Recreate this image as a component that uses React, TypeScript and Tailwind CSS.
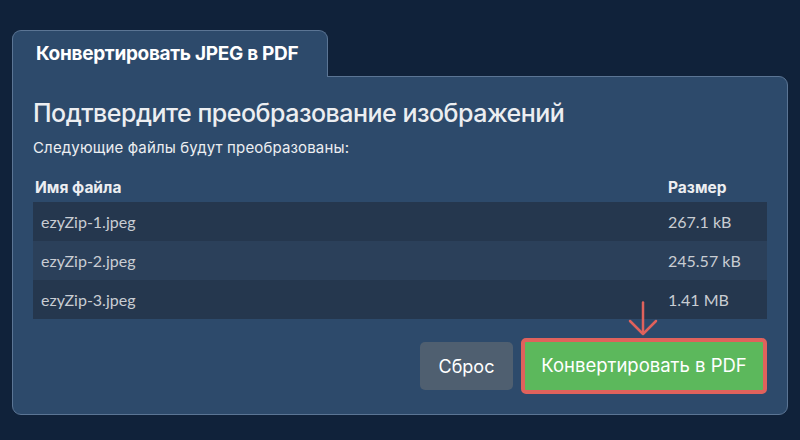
const FILES = [
  { name: 'ezyZip-1.jpeg', size: '267.1 kB' },
  { name: 'ezyZip-2.jpeg', size: '245.57 kB' },
  { name: 'ezyZip-3.jpeg', size: '1.41 MB' },
];

export default function App() {
  return (
    <div className="min-h-screen w-full bg-[#10223a] px-[12px] pt-[30px] font-[Inter,sans-serif]">
      {/* tab */}
      <div className="relative z-10 -mb-px flex h-[47px] w-[316px] items-center rounded-t-[9px] border border-b-0 border-[#5b7594] bg-[#2d4a6b] pl-[23px]">
        <span className="text-[19px] font-bold tracking-[-0.3px] text-white">Конвертировать JPEG в PDF</span>
      </div>

      {/* panel */}
      <div className="h-[339px] w-[776px] rounded-tr-[9px] rounded-b-[9px] border border-[#5b7594] bg-[#2d4a6b] px-[20px] pt-[20px]">
        <h1 className="text-[25px] leading-[32px] font-medium tracking-[-0.5px] text-[#eceef1]">
          Подтвердите преобразование изображений
        </h1>
        <p className="mt-[9px] text-[15px] leading-[20px] tracking-[0.15px] text-[#eceef1]">
          Следующие файлы будут преобразованы:
        </p>

        <div className="mt-[16px]">
          <div className="flex h-[28px] items-center text-[15.5px] font-bold text-[#eceef1]">
            <div className="flex-1 pl-[2px]">Имя файла</div>
            <div className="w-[99px]">Размер</div>
          </div>
          {FILES.map((f, i) => (
            <div
              key={f.name}
              className={
                'flex h-[39px] items-center font-[Lato,sans-serif] text-[16px] text-[#c9cdd3] ' +
                (i % 2 === 0 ? 'bg-[#25374e]' : 'bg-[#2b405a]')
              }
            >
              <div className="flex-1 pl-[8px]">{f.name}</div>
              <div className="w-[99px]">{f.size}</div>
            </div>
          ))}
        </div>

        <div className="mt-[19px] flex justify-end gap-[8px]">
          <button className="mt-[4px] h-[48px] w-[93px] rounded-[5px] bg-[#4f5f70] text-[18px] text-white">
            Сброс
          </button>
          <div className="relative">
            <svg
              className="absolute left-[107px] top-[-37px]"
              width="30"
              height="36"
              viewBox="0 0 30 36"
              fill="none"
              stroke="#e0625c"
              strokeWidth="2.5"
              strokeLinecap="round"
              strokeLinejoin="round"
            >
              <path d="M15 1.5 V32" />
              <path d="M2 20 L15 33 L28 20" />
            </svg>
            <button className="h-[56px] w-[246px] rounded-[5px] border-[4px] border-[#e0625c] bg-[#5cb85c] text-[18.5px] text-white">
              Конвертировать в PDF
            </button>
          </div>
        </div>
      </div>
    </div>
  );
}
